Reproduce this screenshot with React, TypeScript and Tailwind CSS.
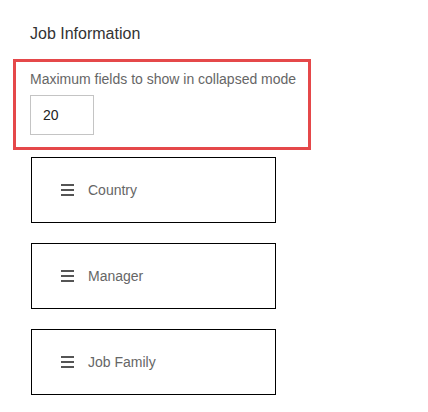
import React from "react";

function Grip() {
  return (
    <div className="flex flex-col gap-[3px] w-[13px]">
      <div className="h-[2px] bg-[#555555]" />
      <div className="h-[2px] bg-[#555555]" />
      <div className="h-[2px] bg-[#555555]" />
    </div>
  );
}

function Card({ label }: { label: string }) {
  return (
    <div className="w-[245px] h-[66px] border border-black flex items-center pl-[29px]">
      <Grip />
      <span className="ml-[14px] text-[14px] text-[#666666]">{label}</span>
    </div>
  );
}

export default function App() {
  return (
    <div
      className="w-[428px] h-[412px] bg-white relative"
      style={{ fontFamily: '"Liberation Sans", Arial, sans-serif' }}
    >
      <div className="pt-[25px] pl-[30px] text-[16px] leading-[18px] text-[#333333]">
        Job Information
      </div>
      <div className="ml-[13px] mt-[16px] w-[298px] h-[91px] border-[3px] border-[#e5484a] pl-[14px] pt-[9px]">
        <div className="text-[14px] leading-[16px] text-[#666666]">
          Maximum fields to show in collapsed mode
        </div>
        <div className="mt-[8px] w-[64px] h-[40px] border border-[#c4c4c4] flex items-center pl-[12px] text-[14px] text-[#222222]">
          20
        </div>
      </div>
      <div className="ml-[31px] mt-[7px] flex flex-col gap-[20px]">
        <Card label="Country" />
        <Card label="Manager" />
        <Card label="Job Family" />
      </div>
    </div>
  );
}
